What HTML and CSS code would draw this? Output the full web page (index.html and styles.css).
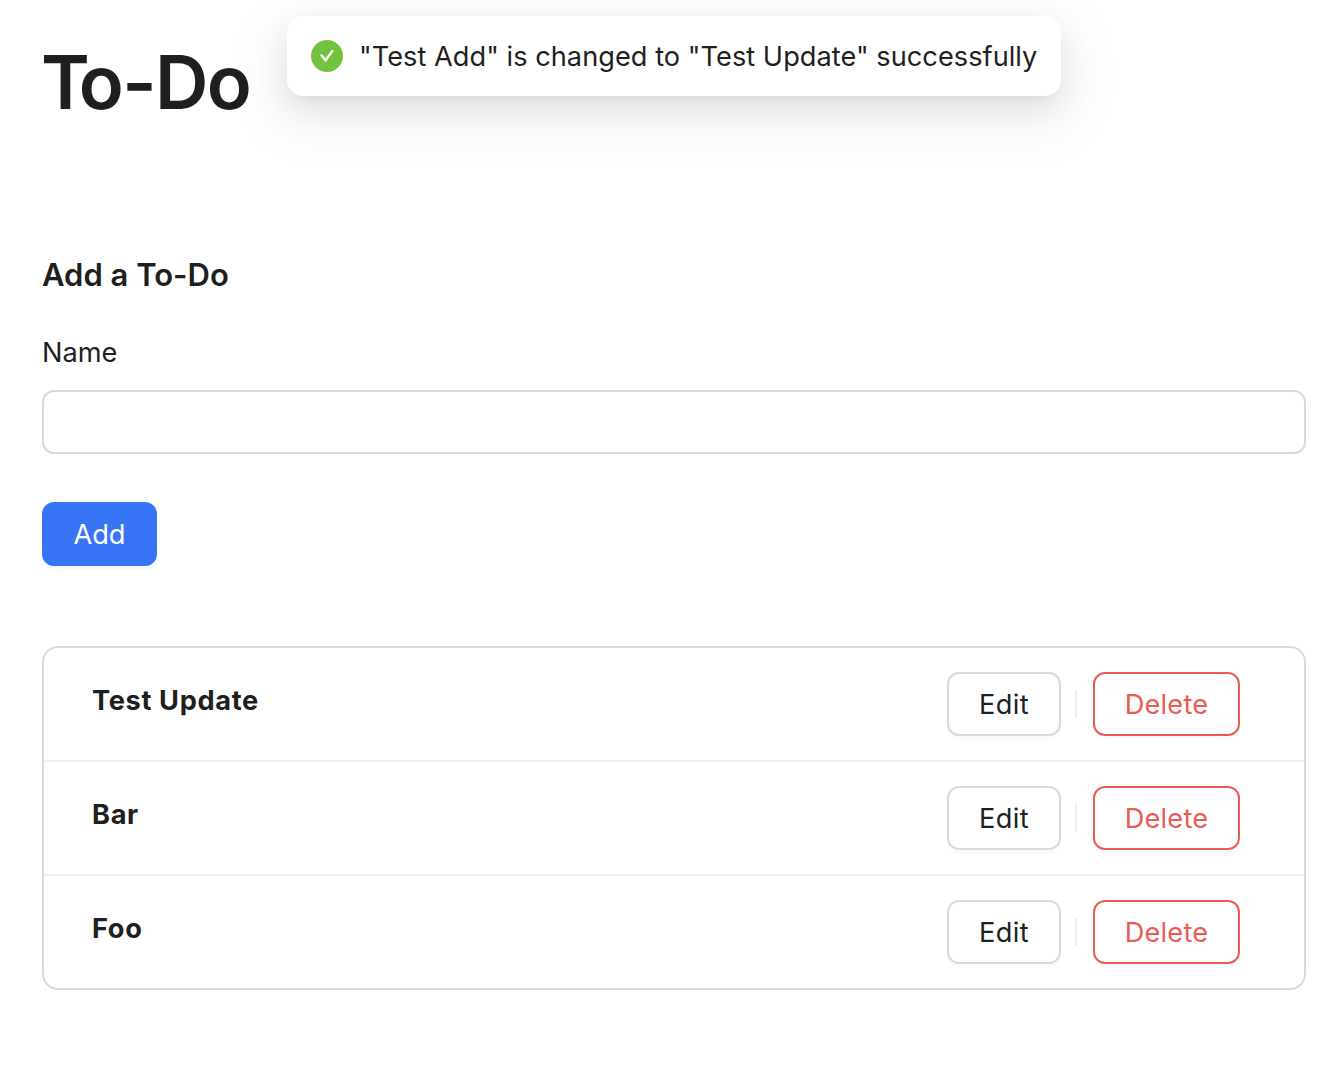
FILE: index.html
```html
<!DOCTYPE html>
<html lang="en">
<head>
<meta charset="utf-8">
<title>To-Do</title>
<link rel="stylesheet" href="styles.css">
</head>
<body>
<div class="message" role="status">
  <svg class="message-icon" viewBox="64 64 896 896" aria-hidden="true"><path fill="currentColor" d="M512 64C264.6 64 64 264.6 64 512s200.6 448 448 448 448-200.6 448-448S759.4 64 512 64zm193.5 301.7l-210.6 292a31.8 31.8 0 01-51.7 0L318.5 484.900c-3.800-5.300 0-12.700 6.500-12.700h46.900c10.200 0 19.900 4.900 25.900 13.300l71.200 98.800 157.200-218c6-8.300 15.600-13.300 25.900-13.300H699c6.500 0 10.300 7.400 6.500 12.700z"/></svg>
  <span class="message-text">"Test Add" is changed to "Test Update" successfully</span>
</div>
<main class="page">
  <h1 class="title"><span class="title-initial">T</span>o-Do</h1>
  <form class="form">
    <h2 class="form-title">Add a To-Do</h2>
    <label class="label" for="name">Name</label>
    <input class="input" id="name" type="text">
    <button class="btn btn-primary" type="button">Add</button>
  </form>
  <ul class="list">
    <li class="item"><span class="item-name">Test Update</span><div class="actions"><button class="btn btn-edit">Edit</button><i class="split"></i><button class="btn btn-delete">Delete</button></div></li>
    <li class="item"><span class="item-name">Bar</span><div class="actions"><button class="btn btn-edit">Edit</button><i class="split"></i><button class="btn btn-delete">Delete</button></div></li>
    <li class="item"><span class="item-name">Foo</span><div class="actions"><button class="btn btn-edit">Edit</button><i class="split"></i><button class="btn btn-delete">Delete</button></div></li>
  </ul>
</main>
</body>
</html>
```
FILE: styles.css
```css
* { box-sizing: border-box; }
body {
  margin: 0;
  background: #fff;
  color: #1f1f1f;
  font: 27.2px/44px Inter, "Liberation Sans", sans-serif;
}
.page { padding: 36px 32px 0 42px; }
.title {
  margin: 0 0 0 -1px;
  font-size: 74px;
  line-height: 92px;
  font-weight: 600;
  letter-spacing: -1.7px;
}
.title-initial { letter-spacing: -11px; }
.form { display: flex; flex-direction: column; align-items: flex-start; margin-top: 123px; }
.form-title { margin: 0; font-size: 31px; line-height: 48px; font-weight: 600; }
.label { margin-top: 32px; }
.input {
  width: 100%;
  height: 64px;
  margin-top: 15px;
  padding: 8px 22px;
  border: 2px solid #d9d9d9;
  border-radius: 12px;
  background: #fff;
  font: inherit;
}
.btn {
  height: 64px;
  padding: 1px 0 0;
  border: 2px solid #d9d9d9;
  border-radius: 12px;
  background: #fff;
  color: #1f1f1f;
  font: inherit;
  box-shadow: 0 4px 0 rgba(0, 0, 0, 0.02);
}
.btn-primary {
  width: 115px;
  margin-top: 48px;
  border-color: #3875f6;
  background: #3875f6;
  color: #fff;
  box-shadow: 0 4px 0 rgba(5, 145, 255, 0.06);
}
.btn-edit { width: 114px; letter-spacing: 0.4px; }
.btn-delete { width: 147px; border-color: #eb5b56; color: #eb5b56; letter-spacing: 0.2px; }
.list {
  list-style: none;
  margin: 80px 0 0;
  padding: 0;
  border: 2px solid #d9d9d9;
  border-radius: 16px;
}
.item {
  display: flex;
  justify-content: space-between;
  align-items: flex-start;
  padding: 24px 64px 24px 48px;
}
.item + .item { border-top: 2px solid #f0f0f0; }
.item-name { margin-top: 7px; font-weight: 700; letter-spacing: 0.65px; }
.actions { display: flex; align-items: center; }
.split { width: 2px; height: 28px; margin: 0 16px 0 14px; background: #f0f0f0; }
.message {
  position: absolute;
  left: 287px;
  top: 16px;
  width: 774px;
  height: 80px;
  display: flex;
  align-items: center;
  gap: 16px;
  padding: 0 24px;
  border-radius: 16px;
  background: #fff;
  white-space: nowrap;
  box-shadow: 0 12px 32px 0 rgba(0, 0, 0, 0.08), 0 6px 12px -8px rgba(0, 0, 0, 0.12), 0 18px 56px 16px rgba(0, 0, 0, 0.05);
}
.message-icon { width: 32px; height: 32px; flex: none; color: #72c240; }
.message-text { padding-top: 1px; letter-spacing: 0.03px; }
```
